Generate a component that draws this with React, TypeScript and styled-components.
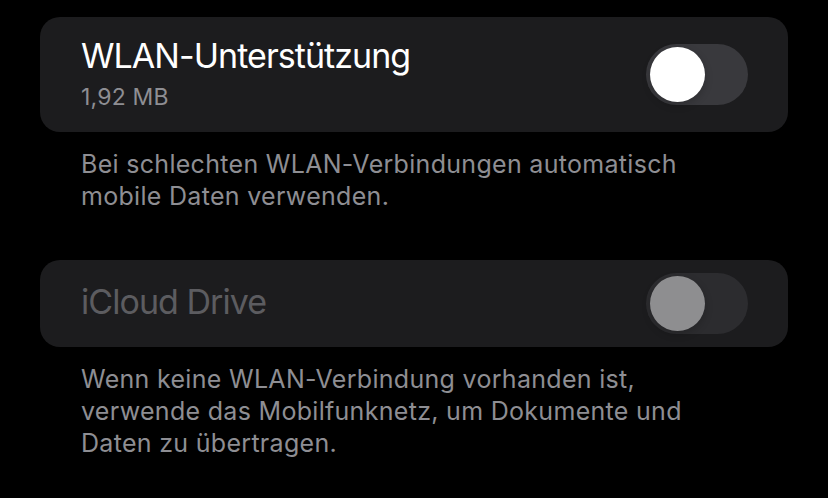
import React from "react";
import styled, { createGlobalStyle } from "styled-components";

const Global = createGlobalStyle`
  html, body { margin: 0; padding: 0; background: #000; }
  body { font-family: Inter, "Noto Sans", sans-serif; -webkit-font-smoothing: antialiased; }
`;

const Page = styled.div`
  width: 828px;
  height: 498px;
  background: #000;
  box-sizing: border-box;
  padding: 17px 40px 0 40px;
  display: flex;
  flex-direction: column;
  overflow: hidden;
`;

const Card = styled.div<{ $h: number }>`
  height: ${(p) => p.$h}px;
  background: #1c1c1e;
  border-radius: 20px;
  box-sizing: border-box;
  padding: 0 40px 0 41px;
  display: flex;
  align-items: center;
  justify-content: space-between;
`;

const Labels = styled.div`
  display: flex;
  flex-direction: column;
  padding-bottom: 3px;
`;

const Title = styled.div<{ $disabled?: boolean }>`
  font-size: 34px;
  line-height: 40px;
  letter-spacing: -0.95px;
  color: ${(p) => (p.$disabled ? "#5c5c60" : "#ffffff")};
`;

const Sub = styled.div`
  font-size: 23px;
  line-height: 28px;
  letter-spacing: 0.2px;
  color: #8e8e93;
  margin-top: 7px;
`;

const Footer = styled.div<{ $mb: number }>`
  padding: 0 0 0 41px;
  margin-top: 16px;
  margin-bottom: ${(p) => p.$mb}px;
  font-size: 25px;
  line-height: 32px;
  letter-spacing: 0.3px;
  color: #8e8e93;
`;

const Track = styled.div<{ $disabled?: boolean }>`
  width: 102px;
  height: 61px;
  border-radius: 31px;
  background: ${(p) => (p.$disabled ? "#2c2c2f" : "#39393d")};
  box-sizing: border-box;
  padding: 3px 4px;
  display: flex;
  align-items: center;
`;

const Knob = styled.div<{ $disabled?: boolean }>`
  width: 55px;
  height: 55px;
  border-radius: 50%;
  background: ${(p) => (p.$disabled ? "#8e8e90" : "#ffffff")};
  box-shadow: 0 3px 8px rgba(0, 0, 0, 0.2);
`;

export default function App() {
  return (
    <>
      <Global />
      <Page>
        <Card $h={115}>
          <Labels>
            <Title>WLAN-Unterstützung</Title>
            <Sub>1,92 MB</Sub>
          </Labels>
          <Track>
            <Knob />
          </Track>
        </Card>
        <Footer $mb={48}>
          Bei schlechten WLAN-Verbindungen automatisch
          <br />
          mobile Daten verwenden.
        </Footer>
        <Card $h={87}>
          <Labels>
            <Title $disabled>iCloud Drive</Title>
          </Labels>
          <Track $disabled>
            <Knob $disabled />
          </Track>
        </Card>
        <Footer $mb={0}>
          Wenn keine WLAN-Verbindung vorhanden ist,
          <br />
          verwende das Mobilfunknetz, um Dokumente und
          <br />
          Daten zu übertragen.
        </Footer>
      </Page>
    </>
  );
}
